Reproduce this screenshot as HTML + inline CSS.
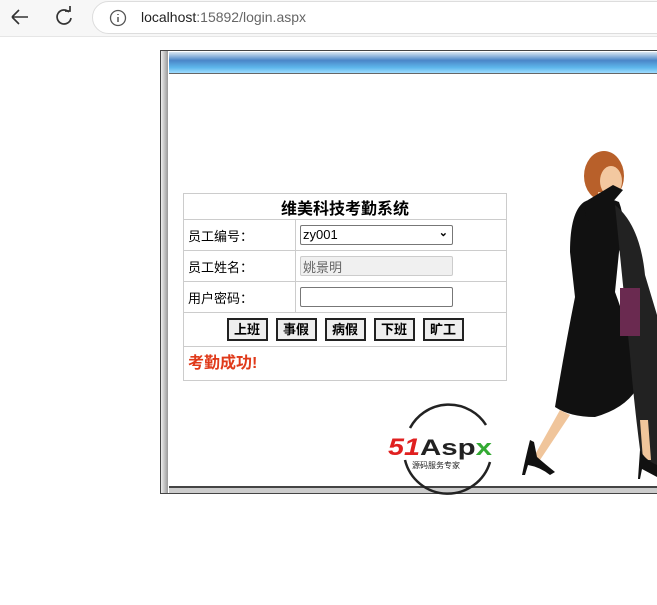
<!DOCTYPE html>
<html><head><meta charset="utf-8"><style>
body{margin:0;width:657px;height:605px;overflow:hidden;background:#fff;font-family:"Liberation Sans","Noto Sans CJK SC",sans-serif;position:relative}
.top{position:absolute;left:0;top:0;width:657px;height:36px;background:#f7f7f7;border-bottom:1px solid #e6e6e6}
.url{position:absolute;left:92px;top:1px;width:580px;height:31px;border:1px solid #ddd;border-radius:17px;background:#fff}
.frame{position:absolute;left:160px;top:50px;width:500px;height:444px;border:1px solid #444;border-right:none;box-sizing:border-box;background:#fff}
.lstrip{position:absolute;left:0;top:0;width:7px;height:100%;background:linear-gradient(90deg,#eee,#999)}
.bar{position:absolute;left:8px;top:1px;right:0;height:21px;background:linear-gradient(#d8e6f2,#4a86c8 40%,#5fb8ec 75%,#9fdcff);border-bottom:1px solid #666}
.bot{position:absolute;left:8px;bottom:0;right:0;height:5px;border-top:2px solid #444;background:#ccc}
table{position:absolute;left:183px;top:193px;width:324px;border-collapse:collapse;font-size:13px}
td{border:1px solid #ccc;padding:0 4px}
.btn{display:inline-block;width:37px;text-align:center;border:2px solid #222;background:#eee;padding:1px 0;margin:0 4px;font-size:13px;font-weight:bold;line-height:17px}
input,.sel{box-sizing:border-box;height:20px;border:1px solid #777;border-radius:2px;width:153px;font-size:13px;padding:1px 2px;font-family:inherit}
</style></head><body>
<div class="top">
<svg style="position:absolute;left:8px;top:7px" width="24" height="20"><path d="M4 10H20M4 10l7-7M4 10l7 7" stroke="#333" stroke-width="1.6" fill="none"/></svg>
<svg style="position:absolute;left:53px;top:6px" width="22" height="22"><path d="M16 6A7 7 0 1 0 18 12" stroke="#333" stroke-width="1.7" fill="none"/><path d="M12 5h5V0" stroke="#333" stroke-width="1.7" fill="none"/></svg>
<div class="url"><svg style="position:absolute;left:16px;top:7px" width="18" height="18"><circle cx="9" cy="9" r="7.5" stroke="#555" fill="none" stroke-width="1.3"/><path d="M9 8v5M9 5v1" stroke="#555" stroke-width="1.5"/></svg>
<span style="position:absolute;left:48px;top:7px;font-size:14px;color:#222">localhost<span style="color:#666">:15892/login.aspx</span></span></div>
</div>
<div class="frame"><div class="lstrip"></div><div class="bar"></div><div class="bot"></div></div>
<svg style="position:absolute;left:0;top:0" width="657" height="605">
<g fill="none" stroke="#222" stroke-width="2.5"><path d="M410 428A44 44 0 0 1 486 425"/><path d="M405 460A44 44 0 0 0 490 462"/></g>
<text x="388" y="455" font-size="24" font-weight="bold" font-style="italic" fill="#e02020" font-family="Liberation Sans" textLength="32" lengthAdjust="spacingAndGlyphs">51</text>
<text x="420" y="455" font-size="22" font-weight="bold" fill="#222" font-family="Liberation Sans" textLength="72" lengthAdjust="spacingAndGlyphs">Asp<tspan fill="#3a3">x</tspan></text>
<text x="412" y="468" font-size="8" fill="#222" font-family="Noto Sans CJK SC">源码服务专家</text>
<ellipse cx="604" cy="176" rx="20" ry="25" fill="#b8602a"/>
<ellipse cx="611" cy="181" rx="11" ry="15" fill="#f3c8a0"/>
<path d="M598 192l8 0 0 12-8 0z" fill="#f3c8a0"/>
<path d="M584 202q15-8 35 0q8 20 0 50l-4 40q15 40 25 90q-10 25-45 35q-25 0-40-10q10-60 20-110l-5-45q0-40 14-50z" fill="#111"/>
<path d="M615 205q25 20 30 70l12 40v150l-15 0q-8-60-12-110z" fill="#222"/>
<path d="M588 200q-8 15 5 25l30-35-10-5z" fill="#111"/>
<rect x="620" y="288" width="20" height="48" fill="#6a2a50"/>
<path d="M560 410l-28 50h8l30-45zM640 420l3 40h8l-3-40z" fill="#f0c59b"/>
<path d="M530 440q-5 20-8 35h3l3-10q12 2 22 10l5-3q-10-8-18-15l-3-15z" fill="#111"/>
<path d="M640 450q5 10 17 15l0 12-15-8-2 10h-2z" fill="#111"/>
</svg>
<table>
<tr style="height:26px"><td colspan="2" style="text-align:center;font-size:16px;font-weight:bold">维美科技考勤系统</td></tr>
<tr style="height:31px"><td style="width:103px">员工编号：</td><td><div class="sel" style="position:relative;line-height:16px">zy001<span style="position:absolute;right:4px;top:-1px;font-size:11px;font-weight:bold">&#x2304;</span></div></td></tr>
<tr style="height:31px"><td>员工姓名：</td><td><input value="姚景明" style="background:#f0f0f0;border-color:#ccc;color:#666"></td></tr>
<tr style="height:31px"><td>用户密码：</td><td><input></td></tr>
<tr style="height:34px"><td colspan="2" style="text-align:center"><span class="btn">上班</span><span class="btn">事假</span><span class="btn">病假</span><span class="btn">下班</span><span class="btn">旷工</span></td></tr>
<tr style="height:34px"><td colspan="2" style="vertical-align:top;color:#e03a1a;font-size:16px;font-weight:bold;padding-top:2px">考勤成功!</td></tr>
</table>
</body></html>
